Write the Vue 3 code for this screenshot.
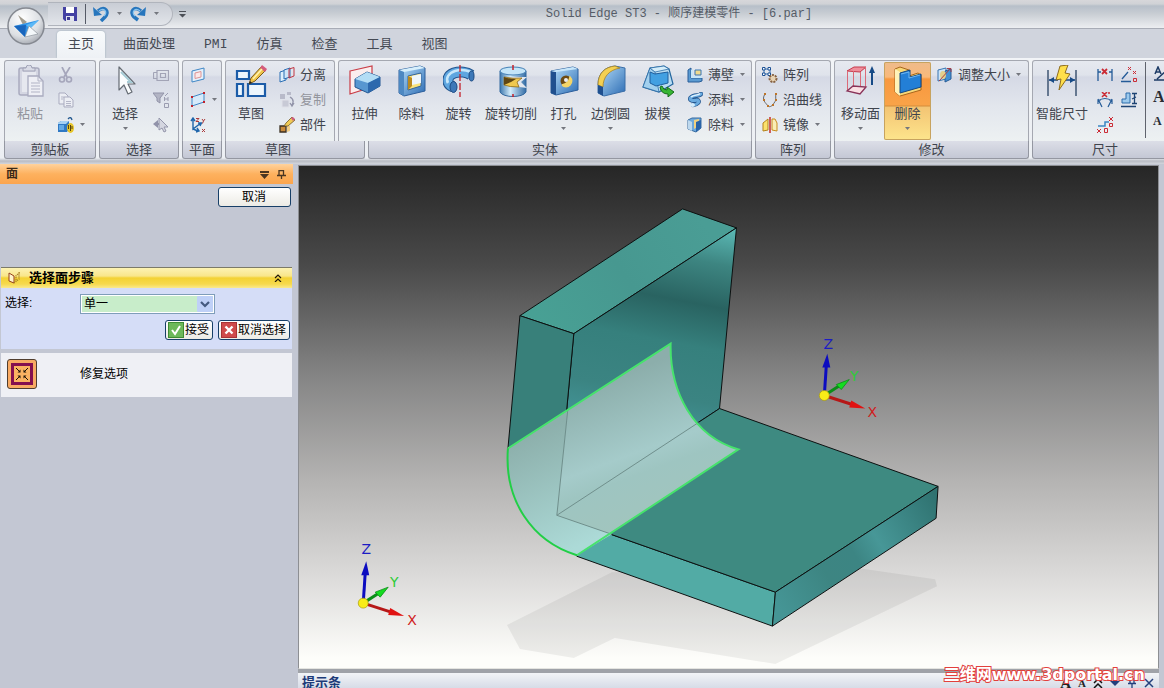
<template>
  <div class="app">
    <!-- icon symbols used by the ribbon and the panels -->
    <svg class="defs" aria-hidden="true">
      <defs>
        <linearGradient id="blue" x1="0" y1="0" x2="1" y2="1">
          <stop offset="0" stop-color="#b9e0fa" /><stop offset="1" stop-color="#2c6cb4" />
        </linearGradient>
        <linearGradient id="cyl" x1="0" y1="0" x2="1" y2="0">
          <stop offset="0" stop-color="#3d78ae" /><stop offset="0.4" stop-color="#d3ecfa" /><stop offset="1" stop-color="#346da6" />
        </linearGradient>
      </defs>
      <symbol id="paste" viewBox="0 0 32 32">
        <rect x="5" y="3" width="20" height="27" rx="2" fill="#d4d6e2" stroke="#a9abbf" stroke-width="1.5" />
        <rect x="8" y="7" width="14" height="20" fill="#e6e8ef" />
        <path d="M9 6 V3 H12 Q12 0 15 0 Q18 0 18 3 H21 V6 Z" fill="#d9dbe6" stroke="#a0a2b6" />
        <path d="M14 11 H24 L29 16 V31 H14 Z" fill="#eeeff5" stroke="#a9abbf" stroke-width="1.3" />
        <path d="M24 11 V16 H29 M17 18 H26 M17 21 H26 M17 24 H26 M17 27 H26" fill="none" stroke="#b1b3c5" />
      </symbol>
      <symbol id="cut" viewBox="0 0 16 16">
        <path d="M4 0 L9 10 M12 0 L6 10" stroke="#a5a6bb" stroke-width="1.7" />
        <circle cx="4" cy="12.5" r="2.5" fill="none" stroke="#a5a6bb" stroke-width="1.6" />
        <circle cx="11" cy="12.5" r="2.5" fill="none" stroke="#a5a6bb" stroke-width="1.6" />
      </symbol>
      <symbol id="copy" viewBox="0 0 16 16">
        <path d="M1 1 H7 L10 4 V12 H1 Z" fill="#eceef4" stroke="#a9abbf" />
        <path d="M3 5 H6 M3 7 H5" stroke="#b5b7c8" />
        <path d="M6 5 H12 L15 8 V15 H6 Z" fill="#eceef4" stroke="#a9abbf" />
        <path d="M8 9.500 H13 M8 11.500 H13 M8 13.500 H13" stroke="#b5b7c8" />
      </symbol>
      <symbol id="format" viewBox="0 0 16 16">
        <path d="M0 6 L3 4 H11 V12 L9 15 H0 Z" fill="#2f79c4" />
        <path d="M0 6 L3 4 H11 L8 7 H0 Z" fill="#a6d2f4" />
        <path d="M1 8 H6 V13 H1 Z" fill="#63aae6" />
        <path d="M10 2 Q13 -1 14 3" fill="none" stroke="#23588f" stroke-width="1.3" />
        <ellipse cx="12.5" cy="11" rx="3.5" ry="5" fill="#e8c62b" />
        <path d="M10.500 8 V12 M12.500 8 V14 M14 9 V12" stroke="#57430d" />
      </symbol>
      <symbol id="arrow" viewBox="0 0 32 32">
        <path d="M10 2 V25 L15 20 L19 29 L23 27 L19 19 H26 Z" fill="#fbfdfe" stroke="#656b73" stroke-width="1.2" stroke-linejoin="round" />
        <path d="M12 7 L22 17 H18" fill="none" stroke="#a6cbd5" stroke-width="2" />
      </symbol>
      <symbol id="selbox" viewBox="0 0 16 16">
        <path d="M0.500 5.500 H4 M0.500 5.500 V11.500 H4 M4 3.500 H15.500 V13.500 H4 Z M7.500 6.500 H12.500 V10.500 H7.500 Z" fill="none" stroke="#a2a4b6" stroke-width="1.2" />
      </symbol>
      <symbol id="filter" viewBox="0 0 16 16">
        <path d="M0 1 H11 L7 6 V11 L4 9 V6 Z" fill="#b2b4c4" stroke="#9193a8" />
        <path d="M15 1 L12 4 M11.500 5 V9 M15 5 V9 M11 7 H15 M11.500 11.500 H15.500 V15.500 H11.500 Z" fill="none" stroke="#9a9cb0" />
      </symbol>
      <symbol id="pick" viewBox="0 0 16 16">
        <path d="M0 7 L5 3 V6 H9 V8 H5 V11 Z" fill="#9193aa" />
        <path d="M6 1 V13 L9 11 L11 15 L13 14 L11 10 H15 Z" fill="#d4d6e0" stroke="#9395aa" />
      </symbol>
      <symbol id="plane1" viewBox="0 0 16 16">
        <path d="M2 4 L14 1 V12 L2 15 Z" fill="#e3f0fb" stroke="#4087c6" />
        <path d="M5 6 L11 4.5 V10 L5 11.5 Z" fill="#fbe9e9" stroke="#dd9494" />
      </symbol>
      <symbol id="plane2" viewBox="0 0 16 16">
        <path d="M2 5 L14 1 V10 L2 14 Z" fill="#d7eafa" stroke="#4087c6" />
        <path d="M1 4 H3 V6 H1 Z M13 0 H15 V2 H13 Z M13 9 H15 V11 H13 Z M1 13 H3 V15 H1 Z" fill="#c3202a" />
      </symbol>
      <symbol id="axes" viewBox="0 0 16 16">
        <path d="M3 1 V12 L11 6 M3 12 L8 14 M1 4 L3 1 L5 4 M8 6 H11.500 L10 9 M6 15 L9 14 L7 11" fill="none" stroke="#1f66ab" stroke-width="1.4" />
        <path d="M6 1.500 H9 L6 4.500 H9 M12 2 L13.500 4 L15 2 M13.500 4 L12.500 6.500 M12 12 L15 15 M15 12 L12 15" fill="none" stroke="#ab3a3a" />
      </symbol>
      <symbol id="sketch" viewBox="0 0 32 32">
        <path d="M2 6 H14 V14 H2 Z M2 19 H8 V31 H2 Z M13 19 H30 V31 H13 Z" fill="#edf6fd" stroke="#1c5ca8" stroke-width="2.2" />
        <path d="M14 19 L16 13 L27 1 L31 5 L20 16 Z" fill="#efc44a" stroke="#7a5a1b" />
        <path d="M25 3 L27 0 L32 4 L30 7 Z" fill="#d45b7c" />
        <path d="M14 19 L15 16 L17 18 Z" fill="#222" />
        <path d="M18 14 L27 4" stroke="#fff3ae" stroke-width="1.5" />
      </symbol>
      <symbol id="separate" viewBox="0 0 16 16">
        <path d="M1 5 L7 3 V13 L1 15 Z" fill="#deeffb" stroke="#2b6eb4" />
        <path d="M5 3 L11 1 V10 L5 12 Z" fill="#cfe6f8" stroke="#2b6eb4" />
        <path d="M10 2 L15 0.500 V9 L10 11 Z" fill="none" stroke="#c03542" />
      </symbol>
      <symbol id="dup" viewBox="0 0 16 16">
        <path d="M1 2 H6 V7 H1 Z M8 0 H12 V3 H8 Z" fill="#b8bac9" />
        <path d="M3 8 H10 V15 H3 Z" fill="#c8cad6" stroke="#dfe0e8" />
        <path d="M11 5 Q16 8 13 13 M11 11 L13 14 L15 11" fill="none" stroke="#9193a8" stroke-width="1.3" />
      </symbol>
      <symbol id="part" viewBox="0 0 16 16">
        <path d="M1 9 H7 V15 H1 Z" fill="#c98a3a" stroke="#3b3122" stroke-width="1.3" />
        <path d="M8 8 L11 9 V14 L8 15 Z" fill="#f0cd86" />
        <path d="M5 9 L7 6 L13 0 L16 3 L9 9 Z" fill="#f0cb55" stroke="#6e5526" stroke-width="0.8" />
        <path d="M12 1 L14 0 L16 2 L14 4 Z" fill="#cf5e81" />
      </symbol>
      <symbol id="extrude" viewBox="0 0 32 32">
        <path d="M1 6 L23 1 V22 L1 29 Z" fill="#fbeeee" stroke="#c93c46" stroke-width="1.2" />
        <path d="M6 14 L18 7 L31 12 V21 L19 28 L6 22 Z" fill="#5797d0" stroke="#235792" />
        <path d="M6 14 L18 7 L31 12 L19 18 Z" fill="#b3ddf5" />
        <path d="M19 18 L31 12 V21 L19 28 Z" fill="#2d69ad" />
      </symbol>
      <symbol id="cutout" viewBox="0 0 32 32">
        <path d="M3 5 L24 1 L29 3 V26 L8 31 L3 28 Z" fill="url(#blue)" stroke="#2c5f9c" />
        <path d="M3 5 L24 1 L29 3 L8 7 Z" fill="#d7effc" />
        <path d="M3 5 L8 7 V31 L3 28 Z" fill="#4d88c2" />
        <path d="M12 11 L25 8 V21 L12 25 Z" fill="#f8e27a" stroke="#35649a" />
        <path d="M12 11 L16 13 V21 L12 25 Z" fill="#b98920" />
        <path d="M16 11 L25 9 V18 L16 20 Z" fill="#eff6fb" />
      </symbol>
      <symbol id="revolve" viewBox="0 0 32 32">
        <path d="M10 22 C3 19 3 11 11 8 C17 6 24 7 28 10" fill="none" stroke="#24568f" stroke-width="11" />
        <path d="M10 22 C3 19 3 11 11 8 C17 6 24 7 28 10" fill="none" stroke="#5ea6e0" stroke-width="9" />
        <path d="M5 18 C2 13 6 8 12 6 C18 4 23 5 28 7" fill="none" stroke="#c7e7fa" stroke-width="2.5" />
        <ellipse cx="10.500" cy="22" rx="3.5" ry="5.500" fill="#3d78b8" stroke="#1c4a82" />
        <ellipse cx="28.500" cy="11" rx="2.5" ry="5" fill="#3d78b8" stroke="#1c4a82" />
        <path d="M17 0 V32" stroke="#c3202a" stroke-width="1.3" stroke-dasharray="7 2" />
      </symbol>
      <symbol id="revcut" viewBox="0 0 32 32">
        <path d="M5 6 V27 C8 33 28 33 31 27 V6 Z" fill="url(#cyl)" stroke="#33689e" />
        <ellipse cx="18" cy="6" rx="13" ry="4" fill="#c4e5f8" stroke="#4480b6" />
        <path d="M9 12 L32 12 L26 17 L32 23 L9 20 Z" fill="#e2e7ee" />
        <path d="M9 12 Q18 14 27 13 L22 17 L24 22 Q14 22 9 20 Z" fill="#efc84f" stroke="#8b6a1c" stroke-width="0.8" />
        <path d="M9 12 Q15 14 21 14 L16 17 L9 20 Z" fill="#5f4613" />
        <path d="M18 0 V5 M18 29 V32" stroke="#c3202a" stroke-width="1.5" />
      </symbol>
      <symbol id="hole" viewBox="0 0 32 32">
        <path d="M3 6 L25 2 L30 4 V25 L8 30 L3 28 Z" fill="url(#blue)" stroke="#2c5f9c" />
        <path d="M3 6 L8 7 V30 L3 28 Z" fill="#1f4f8e" />
        <path d="M3 6 L25 2 L30 4 L8 7 Z" fill="#c7e6fa" />
        <circle cx="18" cy="16" r="5.5" fill="#6d4a12" />
        <path d="M14 20 A5.500 5.500 0 0 0 22 12 Q21 18 14 20" fill="#f4d568" stroke="#f4d568" stroke-width="1.5" />
        <circle cx="18" cy="15" r="2" fill="#e9edf2" />
      </symbol>
      <symbol id="round" viewBox="0 0 32 32">
        <path d="M3 20 C3 8 10 2 20 1 L30 3 V26 L9 31 L3 28 Z" fill="url(#blue)" stroke="#3a6ea8" />
        <path d="M3 20 C3 8 10 2 20 1 L25 3 C14 5 8 12 8 22 Z" fill="#f3d052" stroke="#a9821f" stroke-width="0.8" />
        <path d="M3 20 L8 22 V31 L3 28 Z" fill="#1f4f8e" />
      </symbol>
      <symbol id="draft" viewBox="0 0 32 32">
        <path d="M8 3 L22 1 L27 4 L31 19 L17 27 L1 22 Z" fill="#b8dcf2" stroke="#24679f" stroke-width="1.2" />
        <path d="M8 3 L13 7 L17 27 L1 22 Z" fill="#a2d0ee" stroke="#2f6fa8" stroke-width="0.8" />
        <path d="M8 7 L13 9 L26 7 V18 L14 21 L8 18 Z" fill="#42a0e2" stroke="#1f5f9e" />
        <path d="M8 3 L22 1 L27 4 L13 7 Z" fill="#d4edfa" stroke="#2f6fa8" stroke-width="0.8" />
        <path d="M20 21 Q21 25 25 25 V22 L32 27 L26 32 V29 Q19 29 18 22 Z" fill="#37b634" stroke="#146a18" />
      </symbol>
      <symbol id="thin" viewBox="0 0 16 16">
        <path d="M1 3 L4 1 V11 H15 V14 L12 15 H1 Z" fill="#5b9bd2" stroke="#285d98" />
        <path d="M4 11 V3 L6 2 V9 H15 V11 Z" fill="#c8e6f8" />
        <path d="M8 3 H14 V8 H8 Z" fill="#f0da8e" stroke="#3876b4" />
      </symbol>
      <symbol id="add" viewBox="0 0 16 16">
        <path d="M14 2 C12 5 7 2 3.500 6 C2 9 7 9 10 8 C14 9 10 13 6 13" fill="none" stroke="#24568f" stroke-width="4.5" stroke-linecap="round" />
        <path d="M14 2 C12 5 7 2 3.500 6 C2 9 7 9 10 8 C14 9 10 13 6 13" fill="none" stroke="#69aadf" stroke-width="3" stroke-linecap="round" />
        <path d="M13 1.500 C11 4 7 2 4 5" fill="none" stroke="#e0f2fd" stroke-width="1.3" />
        <ellipse cx="5.500" cy="13" rx="2.500" ry="2" fill="#d5edfc" />
      </symbol>
      <symbol id="remove" viewBox="0 0 16 16">
        <path d="M1 3 L5 1 H14 V11 L9 15 L1 12 Z" fill="#6ea9dc" stroke="#376b9f" />
        <path d="M1 3 L5 5 V14 L1 12 Z" fill="#bed9ee" />
        <path d="M7 3 L12 2 V9 L7 12 Z" fill="#f0d180" />
        <path d="M9 5 L14 3 V11 L9 15 Z" fill="#2a64a8" />
      </symbol>
      <symbol id="pattern" viewBox="0 0 16 16">
        <path d="M2 2 H8 V7 H2 Z" fill="none" stroke="#2e6cb0" />
        <path d="M0.500 0.500 H3 V3 H0.500 Z M6 0.500 H8.500 V3 H6 Z M0.500 6 H3 V8.500 H0.500 Z M6 6 H8.500 V8.500 H6 Z" fill="#fff" stroke="#1d5296" />
        <circle cx="11" cy="11.5" r="3.5" fill="#e7d3b4" stroke="#866141" stroke-width="2" stroke-dasharray="2 1" />
      </symbol>
      <symbol id="curve" viewBox="0 0 16 16">
        <path d="M3 2 C-1 8 4 11 6 14 C8 16 11 13 12 11 C15 8 13 4 14 2" fill="none" stroke="#656769" />
        <path d="M2 1 H4 V3 H2 Z M1 7 H3 V9 H1 Z M5 13 H7 V15 H5 Z M10 12 H12 V14 H10 Z M13 7 H15 V9 H13 Z M13 1 H15 V3 H13 Z" fill="#bd7428" />
      </symbol>
      <symbol id="mirror" viewBox="0 0 16 16">
        <path d="M1 6 L6 2 V13 L1 14 Z" fill="#fbe26c" stroke="#b5831b" />
        <path d="M10 2 L13 2 L15 6 V14 L10 13 Z" fill="#f9eeb5" stroke="#c98b1d" />
        <path d="M8 0 V16" stroke="#c62f29" stroke-width="1.5" />
      </symbol>
      <symbol id="moveface" viewBox="0 0 32 32">
        <path d="M2 6 L9 2 H21 L15 7 Z" fill="#ef8f9c" stroke="#c63a4c" />
        <path d="M2.500 6 V26 M15.500 7 V28 M20.500 2 V22 M8.500 6 V21" fill="none" stroke="#dc6a78" />
        <path d="M2 26 L8 21 L21 22 L15 29 Z" fill="#fadfe4" stroke="#883258" stroke-width="1.3" />
        <path d="M27 20 V4" stroke="#164a86" stroke-width="2" />
        <path d="M24 8 L27 1 L30 8 Z" fill="#164a86" />
      </symbol>
      <symbol id="delface" viewBox="0 0 32 32">
        <path d="M3 4 L8 2 L17 5 V11 L26 8 L29 10 V25 L8 31 L3 27 Z" fill="#f7d878" stroke="#a8651c" />
        <path d="M3 4 L8 7 V31 L3 27 Z" fill="#fff3b9" />
        <path d="M8 8 L18 5 V12 L29 9 V22 L8 28 Z" fill="#237fd6" stroke="#15477f" />
        <path d="M9 9 L17 7 V13 L28 10" fill="none" stroke="#6db6f2" />
      </symbol>
      <symbol id="resize" viewBox="0 0 16 16">
        <path d="M1 3 L9 1 V12 L1 14 Z" fill="#cde4f5" stroke="#3675b3" />
        <path d="M8 4 L14 2 V12 L8 15 Z" fill="#4390d3" stroke="#285c96" />
        <ellipse cx="6" cy="8" rx="3" ry="4" fill="#e4d08c" />
        <path d="M2 14 L13 2 M10 1.500 H14 V5" fill="none" stroke="#a33f48" />
      </symbol>
      <symbol id="smart" viewBox="0 0 32 32">
        <path d="M2 5 V31 M30 5 V31" stroke="#3f5573" stroke-width="1.5" />
        <path d="M3 15 H12 M20 15 H29" stroke="#174a86" stroke-width="1.5" />
        <path d="M3 15 L8 12 V18 Z M29 15 L24 12 V18 Z" fill="#174a86" />
        <path d="M14 1 L22 0 L19 8 L24 9 L13 25 L15 14 L10 15 Z" fill="#ffdf4b" stroke="#8e6c1d" />
      </symbol>
      <symbol id="dim1" viewBox="0 0 16 16">
        <path d="M1 2 V14 M15 2 V14 M1 5 H4 M12 5 H15" stroke="#245b98" stroke-width="1.3" />
        <path d="M5 2 L10 7 M10 2 L5 7" stroke="#cb2b35" stroke-width="1.8" />
      </symbol>
      <symbol id="dim2" viewBox="0 0 16 16">
        <path d="M1 7 L5 15 M15 7 L11 15 M1 9 Q8 4 15 9 M1 12 V8 H4 M15 12 V8 H12" fill="none" stroke="#245b98" stroke-width="1.2" />
        <path d="M5 0 L10 5 M10 0 L5 5 M12 0 V2" stroke="#cb2b35" stroke-width="1.5" />
      </symbol>
      <symbol id="dim3" viewBox="0 0 16 16">
        <path d="M1 9 H8 V5 H12" fill="none" stroke="#3c87c4" stroke-width="1.5" />
        <path d="M12 0 L16 4 M16 0 L12 4 M0 12 L4 16 M4 12 L0 16 M12.500 6.500 H15.500 V9.500 H12.500 Z M7.500 11.500 H10.500 V15.500 H7.500 Z" fill="none" stroke="#cb2b35" />
      </symbol>
      <symbol id="dim4" viewBox="0 0 16 16">
        <path d="M0 14.500 H10 M1 12 L7 5" stroke="#245b98" stroke-width="1.3" />
        <path d="M7 0 L10 3 M10 0 L7 3 M12 4 L15 7 M15 4 L12 7 M12.500 11.500 H15.500 V14.500 H12.500 Z" fill="none" stroke="#cb2b35" />
      </symbol>
      <symbol id="dim5" viewBox="0 0 16 16">
        <path d="M1 7 H5 V1 H9 V11 H1 Z" fill="#9cc9ec" stroke="#2c6cab" />
        <path d="M11 1.500 H16 M13.500 2 V11 M11 11.500 H16 M11 7 L15 5 M0 14.500 H15" stroke="#1d4373" stroke-width="1.3" />
      </symbol>
      <symbol id="textA" viewBox="0 0 16 16">
        <path d="M2 8 L5 1 L8 8 M3 6 H7 M1 14 H15 M4 13 L14 4" fill="none" stroke="#1d3b66" stroke-width="1.5" />
      </symbol>
    </svg>

    <header class="titlebar">
      <button class="orb" aria-label="Solid Edge">
        <svg viewBox="0 0 40 40">
          <defs>
            <radialGradient id="orbFill" cx="0.4" cy="0.3" r="0.7">
              <stop offset="0" stop-color="#fff" /><stop offset="0.7" stop-color="#dcdfe3" /><stop offset="1" stop-color="#aeb2b9" />
            </radialGradient>
          </defs>
          <circle cx="20" cy="20" r="18" fill="url(#orbFill)" stroke="#858991" stroke-width="1.5" />
          <path d="M12 9 L21 16 L17 19 Z" fill="#a29d90" />
          <path d="M8 20 L33 14 L24 22 L19 31 Z" fill="#2e93e8" />
          <path d="M8 20 L20 19 L19 31 Z" fill="#1a66bd" />
          <path d="M20 19 L33 14 L24 23 Z" fill="#5ab8f7" />
          <path d="M23 20 L32 28 L19 31 Z" fill="#f4f8fa" stroke="#8f979e" stroke-width="0.7" />
        </svg>
      </button>
      <div class="quick">
        <button aria-label="保存">
          <svg class="s16" viewBox="0 0 16 16">
            <path d="M1 1 H15 V15 H3 L1 13 Z" fill="#4441a3" />
            <path d="M4 1 H12 V7 H4 Z" fill="#fff" /><path d="M4 10 H12 V15 H4 Z" fill="#e3e5ef" /><path d="M5 11 H8 V14 H5 Z" fill="#3e3b93" />
          </svg>
        </button>
        <span class="bar"></span>
        <button aria-label="撤消">
          <svg class="s16" viewBox="0 0 16 16">
            <path d="M5 5 C12 -1 17 6 12 11 L8 15" fill="none" stroke="#2776bd" stroke-width="3.5" />
            <path d="M0 1 L1 10 L9 9 Z" fill="#2776bd" />
            <path d="M6 5 C11 1 15 6 11 10" fill="none" stroke="#8cc6f0" stroke-width="1.2" />
          </svg>
        </button>
        <svg class="tri" viewBox="0 0 7 4"><path d="M1 0 H6 L3.5 3 Z" /></svg>
        <button aria-label="重做">
          <svg class="s16" viewBox="0 0 16 16">
            <path d="M11 5 C4 -1 -1 6 4 11 L8 14" fill="none" stroke="#2776bd" stroke-width="3.5" />
            <path d="M16 1 L15 10 L7 9 Z" fill="#2776bd" />
            <path d="M10 5 C5 1 1 6 5 10" fill="none" stroke="#8cc6f0" stroke-width="1.2" />
          </svg>
        </button>
        <svg class="tri" viewBox="0 0 7 4"><path d="M1 0 H6 L3.5 3 Z" /></svg>
      </div>
      <button class="more" aria-label="自定义">
        <svg viewBox="0 0 7 7"><path d="M0 0 H7 V1 H0 Z M0 3 H7 L3.5 6.500 Z" /></svg>
      </button>
      <h1>Solid Edge ST3 - 顺序建模零件 - [6.par]</h1>
    </header>

    <nav class="tabs">
      <a v-for="tab in tabs" :key="tab" href="#" :class="{ active: tab == tabActif }" @click.prevent="tabActif = tab">{{ tab }}</a>
    </nav>

    <section class="ribbon">
      <div v-for="g in groups" :key="g.id" class="group" :class="g.id">
        <div class="body">
          <button v-for="b in g.big" :key="b.icon" class="big" :class="{ off: b.off, on: b.on }">
            <svg class="s32"><use :href="'#' + b.icon" /></svg>
            <span>{{ b.label }}</span>
            <svg v-if="b.menu" class="tri" viewBox="0 0 7 4"><path d="M1 0 H6 L3.5 3 Z" /></svg>
          </button>
          <div v-for="(col, n) in g.cols" :key="n" class="col">
            <button v-for="s in col" :key="s.icon" class="small" :class="{ off: s.off }" :aria-label="s.label || s.icon">
              <svg class="s16"><use :href="'#' + s.icon" /></svg>
              <span v-if="s.label">{{ s.label }}</span>
              <svg v-if="s.menu" class="tri" viewBox="0 0 7 4"><path d="M1 0 H6 L3.5 3 Z" /></svg>
            </button>
          </div>
          <div v-if="g.id == 'dim'" class="col letters">
            <svg class="s16"><use href="#textA" /></svg>
            <b>A</b>
            <b class="little">A</b>
          </div>
        </div>
        <div class="caption">{{ g.title }}</div>
      </div>
    </section>

    <main class="work">
      <aside class="panel">
        <div class="panel-head">
          <h2>面</h2>
          <svg viewBox="0 0 9 9"><path d="M0 1 H9 V3 H0 Z M0 4 H9 L4.5 9 Z" fill="#4a3622" /></svg>
          <svg viewBox="0 0 9 9"><path d="M2 0 V5 M6.5 0 V5 M2 0.5 H7 M0 5.5 H9 M4.5 5 V9" fill="none" stroke="#4a3622" stroke-width="1.3" /></svg>
        </div>
        <div class="cancel"><button class="xp wide">取消</button></div>
        <div class="step-head">
          <svg class="book" viewBox="0 0 12 12">
            <path d="M1 1 L6 4 V11 L1 9 Z" fill="#fff3c8" stroke="#963f1d" />
            <path d="M6 11 L11 7 V1 L8 4 V9" fill="none" stroke="#a37c21" stroke-width="1.5" stroke-dasharray="1 1" />
          </svg>
          <h3>选择面步骤</h3>
          <svg class="chev" viewBox="0 0 8 8"><path d="M1 4 L4 1 L7 4 M1 8 L4 5 L7 8" fill="none" stroke="#20180a" stroke-width="1.2" /></svg>
        </div>
        <div class="step">
          <div class="row">
            <label for="mode">选择:</label>
            <div class="combo">
              <select id="mode" v-model="mode">
                <option>单一</option>
                <option>链</option>
              </select>
              <svg viewBox="0 0 16 16"><rect width="16" height="16" rx="1" fill="#bfd0f7" /><path d="M4 6 L8 10 L12 6" fill="none" stroke="#44597f" stroke-width="2.2" /></svg>
            </div>
          </div>
          <div class="actions">
            <button class="xp">
              <svg viewBox="0 0 16 16"><rect width="16" height="16" rx="1" fill="#6cb85a" /><rect x="0.5" y="0.5" width="15" height="15" fill="none" stroke="#3f8c34" /><path d="M4 8 L7 12 L12 4" fill="none" stroke="#fff" stroke-width="2" /></svg>接受</button>
            <button class="xp">
              <svg viewBox="0 0 16 16"><rect width="16" height="16" rx="1" fill="#cf4a4b" /><rect x="0.5" y="0.5" width="15" height="15" fill="none" stroke="#a93336" /><path d="M4.5 4.5 L11.5 11.5 M11.5 4.5 L4.5 11.5" stroke="#fff" stroke-width="2.4" /></svg>取消选择</button>
          </div>
        </div>
        <div class="repair">
          <button class="heal" aria-label="修复">
            <svg viewBox="0 0 22 22">
              <rect x="1.5" y="1.5" width="19" height="19" fill="#fbb262" stroke="#85104f" stroke-width="3" />
              <path d="M5 5 L9 9 M17 5 L13 9 M5 17 L9 13 M17 17 L13 13" stroke="#1c1208" />
              <path d="M9.5 6.500 V9.500 H6.500 Z M12.500 6.500 V9.500 H15.500 Z M9.500 15.500 V12.500 H6.500 Z M12.500 15.500 V12.500 H15.500 Z" fill="#1c1208" />
            </svg>
          </button>
          <span>修复选项</span>
        </div>
      </aside>

      <div class="right">
        <div class="view">
          <svg viewBox="300 165 858 503">
            <defs>
              <linearGradient id="gTop" gradientUnits="userSpaceOnUse" x1="540" y1="320" x2="700" y2="215">
                <stop offset="0" stop-color="#48a094" /><stop offset="0.5" stop-color="#479890" /><stop offset="1" stop-color="#4a9d95" />
              </linearGradient>
              <linearGradient id="gWall" gradientUnits="userSpaceOnUse" x1="745" y1="225" x2="705" y2="435">
                <stop offset="0" stop-color="#5fc0bc" /><stop offset="0.2" stop-color="#3d8581" /><stop offset="0.4" stop-color="#296361" />
                <stop offset="0.6" stop-color="#36807d" /><stop offset="0.85" stop-color="#3b8482" /><stop offset="1" stop-color="#429294" />
              </linearGradient>
              <linearGradient id="gSide" gradientUnits="userSpaceOnUse" x1="775" y1="600" x2="940" y2="500">
                <stop offset="0" stop-color="#459595" /><stop offset="0.3" stop-color="#3d8582" /><stop offset="0.48" stop-color="#3c8583" />
                <stop offset="0.62" stop-color="#479797" /><stop offset="1" stop-color="#2f7270" />
              </linearGradient>
              <linearGradient id="gSel" gradientUnits="userSpaceOnUse" x1="590" y1="385" x2="640" y2="520">
                <stop offset="0" stop-color="#8caeab" /><stop offset="0.55" stop-color="#a5cbca" /><stop offset="0.7" stop-color="#9ec5c1" /><stop offset="1" stop-color="#a1c5be" />
              </linearGradient>
              <linearGradient id="gSelLow" gradientUnits="userSpaceOnUse" x1="520" y1="440" x2="570" y2="550">
                <stop offset="0" stop-color="#8db0ac" /><stop offset="1" stop-color="#acdad7" />
              </linearGradient>
              <g id="triad">
                <path d="M0 0 L2 -30" stroke="#0c0cc0" stroke-width="3" />
                <path d="M-2 -28 L3 -42 L6 -28 Z" fill="#0c0cc0" />
                <path d="M0 0 L17 -11" stroke="#0b8d18" stroke-width="3" />
                <path d="M12 -11 L25 -16 L17 -6 Z" fill="#15dc20" stroke="#0b8d18" stroke-width="0.8" />
                <path d="M0 0 L28 9" stroke="#b61717" stroke-width="3" />
                <path d="M27 5 L41 13 L25 12 Z" fill="#e01212" />
                <circle r="5" fill="#f8ec18" stroke="#aa9d10" stroke-width="0.7" />
              </g>
            </defs>
            <path d="M507 625 L612 572 L860 568 L936 579 L938 586 L776 664 L615 638 L574 658 L520 649 Z" fill="#000" fill-opacity="0.06" />
            <g stroke="#0c1010" stroke-linejoin="round">
              <path d="M683 208 L737 227 L574 333 L520 315 Z" fill="url(#gTop)" />
              <path d="M574 333 L737 227 L720 408 L557 515 Z" fill="url(#gWall)" />
              <path d="M508 448 L520 315 L574 333 L557 515" fill="#38807a" />
              <path d="M557 515 L776 592 L773 626 L577 556 Z" fill="#52aba5" />
              <path d="M557 515 L720 408 L939 486 L776 592 Z" fill="#3e8a81" />
              <path d="M776 592 L939 486 L937 518 L773 626 Z" fill="url(#gSide)" />
            </g>
            <path d="M508 448 L671 343 C670 392 694 436 739 449 L577 555 C532 541 504 500 508 448 Z" fill="url(#gSel)" />
            <path d="M508 448 L568 409 L557 515 L612 534 L577 555 C532 541 504 500 508 448 Z" fill="url(#gSelLow)" />
            <path d="M568 409 L557 515 L699 422 M557 515 L612 534" fill="none" stroke="#6f8f8c" />
            <path d="M508 448 L671 343 C670 392 694 436 739 449 L577 555" fill="none" stroke="#46e36c" stroke-width="2" />
            <path d="M508 448 C504 500 532 541 577 555" fill="none" stroke="#21cf46" stroke-width="2" />
            <use href="#triad" x="825" y="395" />
            <use href="#triad" x="363" y="603" />
            <g class="axis">
              <text x="829" y="348" fill="#1c1cc4">Z</text>
              <text x="855" y="380" fill="#2ecb38">Y</text>
              <text x="873" y="417" fill="#d01c1c">X</text>
              <text x="366" y="554" fill="#1c1cc4">Z</text>
              <text x="394" y="587" fill="#2ecb38">Y</text>
              <text x="412" y="625" fill="#d01c1c">X</text>
            </g>
          </svg>
        </div>
        <div class="prompt">
          <h2>提示条</h2>
          <b>A</b>
          <b class="little">A</b>
          <svg viewBox="0 0 10 10"><path d="M1 5 L5 1 L9 5 M1 10 L5 6 L9 10" fill="none" stroke="#111" stroke-width="1.5" /></svg>
          <svg viewBox="0 0 10 10"><path d="M0 3 H10 L5 8 Z" fill="#223f7c" /></svg>
          <svg viewBox="0 0 10 10"><path d="M3 0 V5 M7 0 V5 M3 0.5 H7 M1 5.5 H9 M5 5 V10" fill="none" stroke="#223f7c" stroke-width="1.3" /></svg>
          <svg viewBox="0 0 10 10"><path d="M1 1 L9 9 M9 1 L1 9" stroke="#223f7c" stroke-width="1.5" /></svg>
        </div>
      </div>
    </main>
    <div class="mark">三维网www.3dportal.cn</div>
  </div>
</template>

<script setup>
import { ref } from 'vue'

const tabs = ['主页', '曲面处理', 'PMI', '仿真', '检查', '工具', '视图']
const tabActif = ref('主页')
const mode = ref('单一')

// les groupes du ruban : grands boutons puis colonnes de petits boutons
const groups = [
  {
    id: 'clip', title: '剪贴板',
    big: [{ icon: 'paste', label: '粘贴', off: true }],
    cols: [[{ icon: 'cut' }, { icon: 'copy' }, { icon: 'format', menu: true }]],
  },
  {
    id: 'sel', title: '选择',
    big: [{ icon: 'arrow', label: '选择', menu: true }],
    cols: [[{ icon: 'selbox' }, { icon: 'filter' }, { icon: 'pick' }]],
  },
  {
    id: 'plane', title: '平面',
    big: [],
    cols: [[{ icon: 'plane1' }, { icon: 'plane2', menu: true }, { icon: 'axes' }]],
  },
  {
    id: 'draw', title: '草图',
    big: [{ icon: 'sketch', label: '草图' }],
    cols: [[{ icon: 'separate', label: '分离' }, { icon: 'dup', label: '复制', off: true }, { icon: 'part', label: '部件' }]],
  },
  {
    id: 'solid', title: '实体',
    big: [
      { icon: 'extrude', label: '拉伸' },
      { icon: 'cutout', label: '除料' },
      { icon: 'revolve', label: '旋转' },
      { icon: 'revcut', label: '旋转切削' },
      { icon: 'hole', label: '打孔', menu: true },
      { icon: 'round', label: '边倒圆', menu: true },
      { icon: 'draft', label: '拔模' },
    ],
    cols: [[{ icon: 'thin', label: '薄壁', menu: true }, { icon: 'add', label: '添料', menu: true }, { icon: 'remove', label: '除料', menu: true }]],
  },
  {
    id: 'array', title: '阵列',
    big: [],
    cols: [[{ icon: 'pattern', label: '阵列' }, { icon: 'curve', label: '沿曲线' }, { icon: 'mirror', label: '镜像', menu: true }]],
  },
  {
    id: 'modify', title: '修改',
    big: [{ icon: 'moveface', label: '移动面', menu: true }, { icon: 'delface', label: '删除', menu: true, on: true }],
    cols: [[{ icon: 'resize', label: '调整大小', menu: true }]],
  },
  {
    id: 'dim', title: '尺寸',
    big: [{ icon: 'smart', label: '智能尺寸' }],
    cols: [[{ icon: 'dim1' }, { icon: 'dim2' }, { icon: 'dim3' }], [{ icon: 'dim4' }, { icon: 'dim5' }]],
  },
]
</script>

<style>
body {
  margin: 0;
  overflow: hidden;
}
</style>

<style scoped>
.app {
  position: relative;
  display: flex;
  flex-direction: column;
  height: 100vh;
  overflow: hidden;
  background: #cfd3dc;
  color: #40444d;
  font-family: "Liberation Sans", "Noto Sans CJK SC", sans-serif;
  font-size: 13px;
  line-height: 18px;
}
.app * {
  box-sizing: border-box;
}
.defs {
  display: block;
  width: 0;
  height: 0;
}
h1, h2, h3 {
  margin: 0;
  font-weight: normal;
}
button {
  border: 0;
  padding: 0;
  background: none;
  color: inherit;
  font: inherit;
}
svg {
  flex: none;
  display: block;
}
.s16 {
  width: 16px;
  height: 16px;
}
.s32 {
  width: 32px;
  height: 32px;
}
.tri {
  width: 7px;
  height: 4px;
  fill: #74777e;
}

/* barre de titre */
.titlebar {
  flex: none;
  display: flex;
  align-items: center;
  height: 29px;
  padding-left: 48px;
  background: linear-gradient(#d7d7da 0, #d0d2d6 4px, #b7bfc9 6px, #c9ced4 14px, #eceef1 28px);
  border-bottom: 1px solid #a8acb6;
}
.orb {
  position: absolute;
  left: 6px;
  top: 6px;
  width: 40px;
  height: 40px;
}
.quick {
  display: flex;
  align-items: center;
  gap: 7px;
  height: 24px;
  padding: 0 12px 0 14px;
  border: 1px solid #b0b4bc;
  border-left: 0;
  border-radius: 0 12px 12px 0;
  background: linear-gradient(#c9cdd5, #e2e5ea);
}
.bar {
  width: 1px;
  height: 20px;
  background: #555a66;
}
.more {
  margin-left: 6px;
}
.more svg {
  width: 7px;
  height: 7px;
  fill: #4c5057;
}
h1 {
  margin: 0 auto;
  padding-left: 8px;
  font-family: "Liberation Mono", "Noto Sans CJK SC", monospace;
  font-size: 12px;
  color: #555c67;
}

/* onglets */
.tabs {
  flex: none;
  display: flex;
  gap: 7px;
  height: 29px;
  padding: 2px 0 0 57px;
  background: #d0d4dd;
}
.tabs a {
  padding: 5px 11px 0;
  color: #454a54;
  text-decoration: none;
  font-family: "Liberation Mono", "Noto Sans CJK SC", monospace;
}
.tabs a.active {
  border-radius: 4px 4px 0 0;
  background: linear-gradient(#f8fbfc, #eef1f5);
  box-shadow: 0 0 2px #8ea5ae;
}

/* ruban */
.ribbon {
  flex: none;
  display: flex;
  align-items: flex-start;
  gap: 3px;
  height: 106px;
  padding: 2px 0 0 4px;
  overflow: hidden;
  background: linear-gradient(#f2f4f7 0, #eceff3 100px, #b9bcc4 103px, #d2d5dc 106px);
}
.group {
  flex: none;
}
.body {
  display: flex;
  height: 81px;
  padding: 1px 0 0 3px;
  border: 1px solid #a5a8b1;
  border-bottom: 0;
  border-radius: 3px 3px 0 0;
  background: linear-gradient(#e6e9f0 0, #dfe3eb 14px, #d5d9e5 16px, #e2e6ed 45px, #edf1f2 80px);
}
.caption {
  height: 18px;
  border: 1px solid #9497a1;
  border-top: 0;
  border-radius: 0 0 3px 3px;
  background: linear-gradient(#dcdee7, #c4c8d5);
  text-align: center;
  line-height: 17px;
}
.clip { width: 92px; }
.sel { width: 80px; }
.plane { width: 40px; }
.draw { width: 110px; }
.solid { width: 414px; }
.array { width: 76px; }
.modify { width: 195px; }
.dim { width: 146px; }
.draw .caption {
  width: 140px;
  padding-right: 34px;
}
.solid .caption {
  margin-left: 30px;
  padding-right: 30px;
}
.plane .body, .solid .body, .modify .body {
  padding-left: 2px;
}
.array .body, .dim .body {
  padding-left: 0;
}
.plane .col {
  margin-left: 3px;
}
.big {
  display: flex;
  flex-direction: column;
  align-items: center;
  width: 44px;
  height: 78px;
  padding-top: 3px;
  border-radius: 2px;
  white-space: nowrap;
}
.big span {
  margin: 8px 0 4px;
}
.solid .big, .modify .big {
  width: 47px;
}
.solid .big:nth-child(4), .dim .big {
  width: 58px;
}
.big.on {
  background: linear-gradient(#eebb8b 0, #f9b97a 15px, #f8983f 17px, #f9a348 43px, #d38c3b 44px, #f3c474 45px, #fde58c 78px);
  box-shadow: inset 0 0 0 1px #c7a35f;
}
.off {
  color: #93959d;
}
.col {
  display: flex;
  flex-direction: column;
  margin-left: 4px;
}
.small {
  display: flex;
  align-items: center;
  gap: 5px;
  height: 25px;
  padding: 0 2px;
  white-space: nowrap;
}
.letters {
  align-items: flex-start;
  margin-left: 6px;
  padding-left: 7px;
  height: 76px;
  border-left: 1px solid #5f636d;
  gap: 6px;
  padding-top: 4px;
}
.letters b {
  color: #2a2d33;
  font-family: "Liberation Serif", serif;
  font-size: 16px;
}
.letters .little {
  font-size: 12px;
}

/* zone de travail */
.work {
  flex: 1;
  display: flex;
  min-height: 0;
  background: #c3c7d3;
}
.panel {
  width: 293px;
  flex: none;
  color: #000;
  font-size: 12px;
}
.panel-head {
  display: flex;
  align-items: center;
  gap: 8px;
  height: 20px;
  padding: 0 7px 0 6px;
  background: linear-gradient(#ffd29c, #fdb15e 10px, #fba54e);
}
.panel-head h2 {
  flex: 1;
  font-size: 12px;
  font-weight: bold;
  color: #3b2a18;
}
.panel-head svg {
  width: 9px;
  height: 9px;
}
.cancel {
  display: flex;
  justify-content: flex-end;
  height: 83px;
  padding: 3px 2px 0 0;
}
.xp {
  display: flex;
  align-items: center;
  justify-content: center;
  height: 20px;
  padding: 0 3px 0 2px;
  border: 1px solid #173f68;
  border-radius: 3px;
  background: linear-gradient(#fff, #ecebe5);
}
.xp.wide {
  width: 73px;
}
.xp svg {
  width: 16px;
  height: 16px;
  margin-right: 1px;
}
.step-head {
  display: flex;
  align-items: center;
  height: 21px;
  margin: 0 1px;
  padding: 0 10px 0 7px;
  border-top: 1px solid #7c7a68;
  background: linear-gradient(#fdf3b3 0, #f9e68a 8px, #f3d233 10px, #f6d94d 16px, #fae98d 20px);
}
.book {
  width: 12px;
  height: 12px;
}
h3 {
  flex: 1;
  padding-left: 9px;
  font-size: 13px;
  font-weight: bold;
}
.chev {
  width: 8px;
  height: 8px;
}
.step {
  margin: 0 1px;
  padding: 6px 2px 9px 4px;
  background: #d5ddf7;
}
.row {
  display: flex;
}
.row label {
  width: 75px;
}
.combo {
  position: relative;
  width: 135px;
}
.combo select {
  display: block;
  width: 100%;
  height: 20px;
  padding: 0 20px 0 3px;
  border: 1px solid #7f9db9;
  border-radius: 0;
  background: #c8edca;
  box-shadow: inset 0 0 0 1px #fff;
  appearance: none;
  color: #000;
  font: inherit;
}
.combo svg {
  position: absolute;
  top: 2px;
  right: 2px;
  width: 16px;
  height: 16px;
  pointer-events: none;
}
.actions {
  display: flex;
  justify-content: flex-end;
  gap: 5px;
  padding-top: 6px;
}
.repair {
  display: flex;
  align-items: center;
  height: 44px;
  margin: 4px 1px 0;
  padding: 0 6px 3px;
  background: #eff0f5;
}
.repair span {
  padding-left: 43px;
}
.heal {
  padding: 3px;
  border: 1px solid #4f3d2e;
  border-radius: 3px;
  background: #f9aa63;
}
.heal svg {
  width: 22px;
  height: 22px;
}
.right {
  flex: 1;
  display: flex;
  flex-direction: column;
  min-width: 0;
  margin: 1px 5px 0 5px;
}
.view {
  flex: 1;
  min-height: 0;
  border: 1px solid #8d8f93;
  border-bottom-color: #e4e4e0;
  background: linear-gradient(#262626 0, #4a4a4a 20%, #858585 42%, #b5b4b3 63%, #dcdbda 82%, #fdfdfa 98%);
}
.view svg {
  width: 100%;
  height: 100%;
}
.axis {
  font-family: "DejaVu Sans", sans-serif;
  font-size: 14px;
  text-anchor: middle;
}
.prompt {
  flex: none;
  display: flex;
  align-items: center;
  gap: 7px;
  height: 19px;
  padding: 5px 5px 0 4px;
  overflow: hidden;
  border-top: 4px solid #9fa2a8;
  background: linear-gradient(#f2f4f7, #d7dce7);
}
.prompt h2 {
  flex: 1;
  font-size: 13px;
  font-weight: bold;
  color: #1c3a78;
}
.prompt b {
  color: #222;
  font-family: "Liberation Serif", serif;
  font-size: 15px;
}
.prompt .little {
  font-size: 11px;
}
.prompt svg {
  width: 10px;
  height: 10px;
}
.mark {
  position: absolute;
  right: 19px;
  bottom: 4px;
  color: #fff;
  font-family: "DejaVu Sans", "Noto Sans CJK SC", sans-serif;
  font-size: 16px;
  font-weight: bold;
  -webkit-text-stroke: 2px #e2403c;
  paint-order: stroke fill;
}
</style>
